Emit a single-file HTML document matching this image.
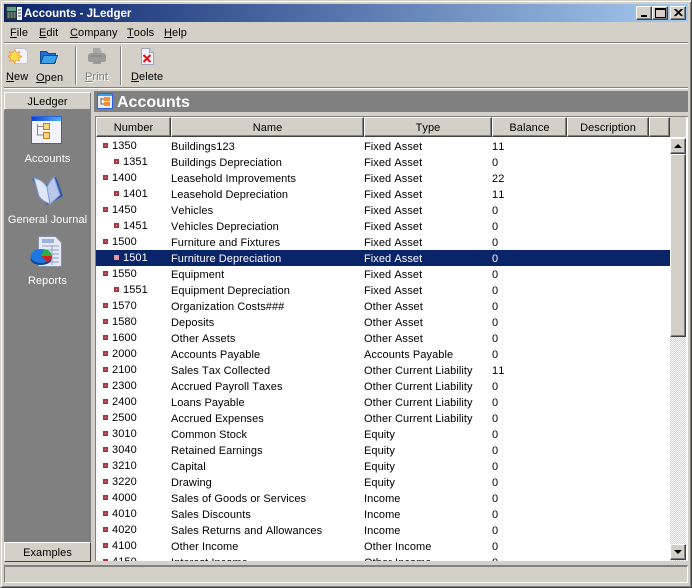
<!DOCTYPE html>
<html><head><meta charset="utf-8"><style>
*{box-sizing:border-box}
html,body{margin:0;padding:0}
body{width:692px;height:588px;overflow:hidden;position:relative;background:#d4d0c8;font:11px/16px "Liberation Sans",sans-serif;color:#000;letter-spacing:.07px;font-kerning:none}
div,span,svg{position:absolute}
u{text-decoration:underline}
.win{left:0;top:0;width:692px;height:588px;border:1px solid;border-color:#d4d0c8 #404040 #404040 #d4d0c8;box-shadow:inset 1px 1px 0 #fff,inset -1px -1px 0 #808080}
.tb{left:4px;top:4px;width:684px;height:18px;background:linear-gradient(90deg,#0a246a,#a6caf0);color:#fff;font:bold 11.5px/18px "Liberation Sans",sans-serif;letter-spacing:0}
.wb{top:6px;width:16px;height:14px;background:#d4d0c8;border:1px solid;border-color:#fff #404040 #404040 #fff;box-shadow:inset -1px -1px 0 #808080}
.m{top:25px;line-height:17px}
.h{left:4px;width:684px;height:2px;border-top:1px solid #808080;border-bottom:1px solid #fff}
.vs{top:46px;width:2px;height:39px;border-left:1px solid #808080;border-right:1px solid #fff}
.tl{top:69px;text-align:center;line-height:17px;white-space:nowrap}
.btn{background:#d4d0c8;border:1px solid;border-color:#fff #808080 #808080 #fff;text-align:center}
.side{left:4px;top:92px;width:87px;height:470px;background:#808080}
.sl{left:4px;width:87px;text-align:center;color:#fff}
.hd{top:117px;height:20px;line-height:20px;background:#d4d0c8;border:1px solid;border-color:#fff #404040 #404040 #fff;box-shadow:inset -1px -1px 0 #808080;text-align:center}
.tbl{left:96px;top:138px;width:574px;height:423px;background:#fff;overflow:hidden}
.r{left:0;width:574px;height:16px;line-height:16px;white-space:nowrap}
.r span{top:1px}
.r i{position:absolute;top:5px;left:7px;width:5px;height:5px;background:#fff;border:2px solid #a8323e}
.r .n{top:0;left:16px}.r.c .n{left:27px}
.r.c i{left:18px}
.a{left:75px}.b{left:268px}.d{left:396px}
.sel{background:#0a246a;color:#fff}
.sel i{background:#fff;border-color:#e8909c}
</style></head><body>
<div class="win"></div>
<div class="tb"><span style="left:20px;top:1px;white-space:nowrap">Accounts - JLedger</span>
<svg style="left:2px;top:2px" width="16" height="15" viewBox="0 0 16 15"><rect x="0" y="0" width="11" height="14" fill="#283838"/><rect x="1" y="1" width="9" height="4" fill="#60a090"/><path d="M1.500 7h2M4.500 7h2M7.500 7h2M1.500 9h2M4.500 9h2M7.500 9h2M1.500 11h2M4.500 11h2M7.500 11h2" stroke="#b8c8c0"/><rect x="11" y="1" width="5" height="13" fill="#f0f0f8"/><path d="M12 4h3M12 7h3M12 10h3" stroke="#556"/></svg></div>
<div class="wb" style="left:636px"><div style="left:4px;top:8px;width:6px;height:2px;background:#000"></div></div>
<div class="wb" style="left:652px"><div style="left:2px;top:1px;width:11px;height:10px;border:1px solid #000;border-top-width:2px"></div></div>
<div class="wb" style="left:670px"><svg style="left:3px;top:2px" width="9" height="8" viewBox="0 0 9 8"><path d="M.5 0L7.500 7M1.500 0L8.500 7M7.500 0L.5 7M8.500 0L1.500 7" stroke="#000"/></svg></div>
<div class="m" style="left:10px"><u>F</u>ile</div><div class="m" style="left:39px"><u>E</u>dit</div><div class="m" style="left:70px"><u>C</u>ompany</div><div class="m" style="left:127px"><u>T</u>ools</div><div class="m" style="left:164px"><u>H</u>elp</div>
<div class="h" style="top:42px"></div>
<svg style="left:8px;top:47px" width="20" height="18" viewBox="0 0 20 18"><path d="M6.500 1.500h10l3 3v12h-13z" fill="#f2f2fa" stroke="#c0c4d4"/><path d="M7 3l1.500 3 3-1.500-1 3.500 3 1.500-3 1.500 1 3-3.500-1-1.500 3-1.500-3-3.500 1 1-3-2.500-1.500 2.500-1.500-1-3.500 3 1.500z" fill="#fce050" stroke="#f09030" stroke-width=".8"/></svg>
<svg style="left:40px;top:50px" width="18" height="14" viewBox="0 0 18 14"><path d="M.5 1.500h6l2 2h7v9H.5z" fill="#1f70d0" stroke="#124a90"/><path d="M3.500 5.500h14l-3 8H.5z" fill="#3aa0ee" stroke="#124a90"/></svg>
<svg style="left:88px;top:48px" width="18" height="16" viewBox="0 0 18 16"><path d="M5 0h7l2 5H5z" fill="#a8a8a8"/><path d="M0 8q0-3 4-3h10q4 0 4 3v4q0 2-3 2h-2v2H5v-2H3q-3 0-3-2z" fill="#9a9a9a"/><path d="M3 8h11" stroke="#808080"/></svg>
<svg style="left:141px;top:48px" width="13" height="17" viewBox="0 0 13 17"><path d="M.5.5h8l4 4v12H.5z" fill="#f2f2fa" stroke="#a0a4b8"/><path d="M8.500.5v4h4" fill="#d0d4e4" stroke="#a0a4b8"/><path d="M2.500 7l7 7M9.500 7l-7 7" stroke="#e01010" stroke-width="2"/></svg>
<div class="tl" style="left:6px"><u>N</u>ew</div>
<div class="tl" style="left:36px;top:70px"><u>O</u>pen</div>
<div class="tl" style="left:85px;color:#808080;text-shadow:1px 1px 0 #fff"><u>P</u>rint</div>
<div class="tl" style="left:131px"><u>D</u>elete</div>
<div class="vs" style="left:75px"></div><div class="vs" style="left:120px"></div>
<div class="h" style="top:87px"></div>
<div class="side"></div>
<div class="btn" style="left:4px;top:92px;width:87px;height:18px;line-height:18px">JLedger</div>
<svg style="left:31px;top:116px" width="31" height="28" viewBox="0 0 31 28"><defs><linearGradient id="g" x1="0" y1="0" x2="1" y2="0"><stop offset="0" stop-color="#1040d0"/><stop offset="1" stop-color="#50b0f8"/></linearGradient></defs><rect x=".5" y=".5" width="30" height="27" fill="#f4f4fc" stroke="#2a62e0"/><rect x="1" y="1" width="29" height="4" fill="url(#g)"/><path d="M6.500 8v11h6M6.500 10.500h6" stroke="#888" fill="none"/><rect x="12.500" y="7.500" width="6" height="6" fill="#f8d878" stroke="#c08020"/><rect x="12.500" y="16.500" width="6" height="6" fill="#f8d878" stroke="#c08020"/></svg>
<div class="sl" style="top:151px">Accounts</div>
<svg style="left:29px;top:175px" width="36" height="34" viewBox="0 0 36 34"><path d="M3 3l6 12 9 15 16-9-7-19-3 1-3 8z" fill="#2458b0"/><path d="M5 3q9 2 13 9l3 17q-8-3-11-8z" fill="#dfe6f6" stroke="#7f9cd8"/><path d="M18 12q3-6 7-10l6 18-10 9z" fill="#b8c8e8" stroke="#7f9cd8"/></svg>
<div class="sl" style="top:212px">General Journal</div>
<svg style="left:30px;top:236px" width="33" height="32" viewBox="0 0 33 32"><path d="M8.500.5h17l6 6v24h-23z" fill="#e6eaf6" stroke="#8a90a8"/><path d="M12 3h12v4H12z" fill="#a0b0d8"/><path d="M12 10h17M12 14h17M12 18h17M12 22h17M12 26h17M22 9v20" stroke="#8fa0c8"/><ellipse cx="11" cy="23" rx="10.500" ry="6" fill="#123f90"/><ellipse cx="11" cy="20" rx="10.500" ry="7" fill="#1c78e0"/><path d="M11 20l3-7q7 1 8 7z" fill="#30b040"/><path d="M11 20h11q0 4-5 6z" fill="#d02020"/></svg>
<div class="sl" style="top:273px">Reports</div>
<div class="btn" style="left:4px;top:542px;width:87px;height:20px;line-height:20px;border-right-color:#404040;border-bottom-color:#404040">Examples</div>
<div style="left:94px;top:91px;width:594px;height:21px;background:#808080;color:#fff;font:bold 16px/21px 'Liberation Sans',sans-serif;letter-spacing:0"><span style="left:23px;top:1px">Accounts</span>
<svg style="left:3px;top:2px" width="16" height="16" viewBox="0 0 16 16"><rect x=".5" y=".5" width="15" height="15" fill="#e8ecf8" stroke="#2a62e0"/><rect x="1" y="1" width="14" height="2" fill="#3c9cf0"/><rect x="7" y="4" width="6" height="4" fill="#f09030"/><rect x="7" y="9" width="6" height="4" fill="#f09030"/><path d="M4 5v6h3M4 6h3" stroke="#666" fill="none"/></svg></div>
<div style="left:95px;top:116px;width:593px;height:445px;background:#fff;border-top:1px solid #808080;border-left:1px solid #808080"></div>
<div style="left:96px;top:117px;width:590px;height:20px;background:#d4d0c8"></div>
<div class="hd" style="left:96px;width:75px">Number</div>
<div class="hd" style="left:171px;width:193px">Name</div>
<div class="hd" style="left:364px;width:128px">Type</div>
<div class="hd" style="left:492px;width:75px">Balance</div>
<div class="hd" style="left:567px;width:82px">Description</div>
<div class="hd" style="left:649px;width:21px"></div>
<div class="tbl">
<div class="r" style="top:0"><i></i><span class="n">1350</span><span class="a">Buildings123</span><span class="b">Fixed Asset</span><span class="d">11</span></div>
<div class="r c" style="top:16px"><i></i><span class="n">1351</span><span class="a">Buildings Depreciation</span><span class="b">Fixed Asset</span><span class="d">0</span></div>
<div class="r" style="top:32px"><i></i><span class="n">1400</span><span class="a">Leasehold Improvements</span><span class="b">Fixed Asset</span><span class="d">22</span></div>
<div class="r c" style="top:48px"><i></i><span class="n">1401</span><span class="a">Leasehold Depreciation</span><span class="b">Fixed Asset</span><span class="d">11</span></div>
<div class="r" style="top:64px"><i></i><span class="n">1450</span><span class="a">Vehicles</span><span class="b">Fixed Asset</span><span class="d">0</span></div>
<div class="r c" style="top:80px"><i></i><span class="n">1451</span><span class="a">Vehicles Depreciation</span><span class="b">Fixed Asset</span><span class="d">0</span></div>
<div class="r" style="top:96px"><i></i><span class="n">1500</span><span class="a">Furniture and Fixtures</span><span class="b">Fixed Asset</span><span class="d">0</span></div>
<div class="r c sel" style="top:112px"><i></i><span class="n">1501</span><span class="a">Furniture Depreciation</span><span class="b">Fixed Asset</span><span class="d">0</span></div>
<div class="r" style="top:128px"><i></i><span class="n">1550</span><span class="a">Equipment</span><span class="b">Fixed Asset</span><span class="d">0</span></div>
<div class="r c" style="top:144px"><i></i><span class="n">1551</span><span class="a">Equipment Depreciation</span><span class="b">Fixed Asset</span><span class="d">0</span></div>
<div class="r" style="top:160px"><i></i><span class="n">1570</span><span class="a">Organization Costs###</span><span class="b">Other Asset</span><span class="d">0</span></div>
<div class="r" style="top:176px"><i></i><span class="n">1580</span><span class="a">Deposits</span><span class="b">Other Asset</span><span class="d">0</span></div>
<div class="r" style="top:192px"><i></i><span class="n">1600</span><span class="a">Other Assets</span><span class="b">Other Asset</span><span class="d">0</span></div>
<div class="r" style="top:208px"><i></i><span class="n">2000</span><span class="a">Accounts Payable</span><span class="b">Accounts Payable</span><span class="d">0</span></div>
<div class="r" style="top:224px"><i></i><span class="n">2100</span><span class="a">Sales Tax Collected</span><span class="b">Other Current Liability</span><span class="d">11</span></div>
<div class="r" style="top:240px"><i></i><span class="n">2300</span><span class="a">Accrued Payroll Taxes</span><span class="b">Other Current Liability</span><span class="d">0</span></div>
<div class="r" style="top:256px"><i></i><span class="n">2400</span><span class="a">Loans Payable</span><span class="b">Other Current Liability</span><span class="d">0</span></div>
<div class="r" style="top:272px"><i></i><span class="n">2500</span><span class="a">Accrued Expenses</span><span class="b">Other Current Liability</span><span class="d">0</span></div>
<div class="r" style="top:288px"><i></i><span class="n">3010</span><span class="a">Common Stock</span><span class="b">Equity</span><span class="d">0</span></div>
<div class="r" style="top:304px"><i></i><span class="n">3040</span><span class="a">Retained Earnings</span><span class="b">Equity</span><span class="d">0</span></div>
<div class="r" style="top:320px"><i></i><span class="n">3210</span><span class="a">Capital</span><span class="b">Equity</span><span class="d">0</span></div>
<div class="r" style="top:336px"><i></i><span class="n">3220</span><span class="a">Drawing</span><span class="b">Equity</span><span class="d">0</span></div>
<div class="r" style="top:352px"><i></i><span class="n">4000</span><span class="a">Sales of Goods or Services</span><span class="b">Income</span><span class="d">0</span></div>
<div class="r" style="top:368px"><i></i><span class="n">4010</span><span class="a">Sales Discounts</span><span class="b">Income</span><span class="d">0</span></div>
<div class="r" style="top:384px"><i></i><span class="n">4020</span><span class="a">Sales Returns and Allowances</span><span class="b">Income</span><span class="d">0</span></div>
<div class="r" style="top:400px"><i></i><span class="n">4100</span><span class="a">Other Income</span><span class="b">Other Income</span><span class="d">0</span></div>
<div class="r" style="top:416px"><i></i><span class="n">4150</span><span class="a">Interest Income</span><span class="b">Other Income</span><span class="d">0</span></div>
</div>
<div style="left:670px;top:138px;width:16px;height:423px;background-color:#fff;background-image:repeating-conic-gradient(#d4d0c8 0 25%,#fff 0 50%);background-size:2px 2px"></div>
<div class="wb" style="left:670px;top:138px;height:16px"><div style="left:3px;top:5px;width:0;height:0;border:4px solid transparent;border-top:0;border-bottom:4px solid #000"></div></div>
<div class="wb" style="left:670px;top:154px;height:183px"></div>
<div class="wb" style="left:670px;top:544px;height:16px"><div style="left:3px;top:5px;width:0;height:0;border:4px solid transparent;border-bottom:0;border-top:4px solid #000"></div></div>
<div style="left:4px;top:565px;width:684px;height:18px;border:1px solid;border-color:#808080 #fff #fff #808080;border-top-width:2px"></div>
</body></html>
